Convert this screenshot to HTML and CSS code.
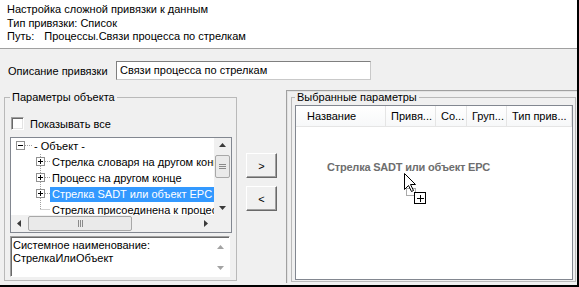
FILE: index.html
```html
<html lang="ru">
<head>
  <meta charset="UTF-8">
  <title>Настройка сложной привязки к данным</title>
  <link rel="stylesheet" href="styles.css">
</head>
<body>

<div class="window">

  <div class="info">
    <div>Настройка сложной привязки к данным</div>
    <div>Тип привязки: Список</div>
    <div>Путь:<span class="path">Процессы.Связи процесса по стрелкам</span></div>
  </div>

  <div class="desc_row">
    <span class="desc_label">Описание привязки</span>
    <div class="textbox">Связи процесса по стрелкам</div>
  </div>

  <div class="main">

    <fieldset class="group group--left">
      <legend>Параметры объекта</legend>

      <div class="check_row">
        <span class="checkbox"></span>
        <span>Показывать все</span>
      </div>

      <div class="tree">
        <div class="tree_rows">
          <div class="tree_row tree_row--root">
            <svg class="twig" width="16" height="16" viewBox="0 0 16 16">
              <line class="dots" x1="9" y1="7.5" x2="16" y2="7.5"/>
              <rect class="pm_box" x="0.5" y="3.5" width="8" height="8"/>
              <line class="pm_sign" x1="2" y1="7.5" x2="7" y2="7.5"/>
            </svg>
            <span class="node">- Объект -</span>
          </div>
          <div class="tree_row tree_row--child">
            <svg class="twig" width="14" height="16" viewBox="0 0 14 16">
              <line class="dots" x1="4.5" y1="0" x2="4.5" y2="16"/>
              <line class="dots" x1="9" y1="7.5" x2="14" y2="7.5"/>
              <rect class="pm_box" x="0.5" y="3.5" width="8" height="8"/>
              <line class="pm_sign" x1="2" y1="7.5" x2="7" y2="7.5"/>
              <line class="pm_sign" x1="4.5" y1="5" x2="4.5" y2="10"/>
            </svg>
            <span class="node">Стрелка словаря на другом конце</span>
          </div>
          <div class="tree_row tree_row--child">
            <svg class="twig" width="14" height="16" viewBox="0 0 14 16">
              <line class="dots" x1="4.5" y1="0" x2="4.5" y2="16"/>
              <line class="dots" x1="9" y1="7.5" x2="14" y2="7.5"/>
              <rect class="pm_box" x="0.5" y="3.5" width="8" height="8"/>
              <line class="pm_sign" x1="2" y1="7.5" x2="7" y2="7.5"/>
              <line class="pm_sign" x1="4.5" y1="5" x2="4.5" y2="10"/>
            </svg>
            <span class="node">Процесс на другом конце</span>
          </div>
          <div class="tree_row tree_row--child">
            <svg class="twig" width="14" height="16" viewBox="0 0 14 16">
              <line class="dots" x1="4.5" y1="0" x2="4.5" y2="16"/>
              <line class="dots" x1="9" y1="7.5" x2="14" y2="7.5"/>
              <rect class="pm_box" x="0.5" y="3.5" width="8" height="8"/>
              <line class="pm_sign" x1="2" y1="7.5" x2="7" y2="7.5"/>
              <line class="pm_sign" x1="4.5" y1="5" x2="4.5" y2="10"/>
            </svg>
            <span class="node node--selected">Стрелка SADT или объект EPC</span>
          </div>
          <div class="tree_row tree_row--child">
            <svg class="twig" width="14" height="16" viewBox="0 0 14 16">
              <line class="dots" x1="4.5" y1="0" x2="4.5" y2="7.5"/>
              <line class="dots" x1="4.5" y1="7.5" x2="14" y2="7.5"/>
            </svg>
            <span class="node">Стрелка присоединена к процессу</span>
          </div>
        </div>

        <div class="vscroll">
          <svg class="arrow" width="7" height="4" viewBox="0 0 7 4"><polygon points="3.5,0 7,4 0,4"/></svg>
          <div class="vscroll_track">
            <div class="vthumb">
              <svg width="7" height="5" viewBox="0 0 7 5"><path d="M0 0.5H7M0 2.5H7M0 4.5H7"/></svg>
            </div>
          </div>
          <svg class="arrow" width="7" height="4" viewBox="0 0 7 4"><polygon points="0,0 7,0 3.5,4"/></svg>
        </div>

        <div class="hscroll">
          <svg class="arrow" width="4" height="7" viewBox="0 0 4 7"><polygon points="0,3.5 4,0 4,7"/></svg>
          <div class="hscroll_track">
            <div class="hthumb">
              <svg width="5" height="7" viewBox="0 0 5 7"><path d="M0.5 0V7M2.5 0V7M4.5 0V7"/></svg>
            </div>
          </div>
          <svg class="arrow" width="4" height="7" viewBox="0 0 4 7"><polygon points="0,0 4,3.5 0,7"/></svg>
        </div>

        <div class="corner"></div>
      </div>

      <div class="sysname">
        <div class="sysname_text">
          Системное наименование:<br>
          СтрелкаИлиОбъект
        </div>
        <div class="sysname_scroll">
          <svg class="arrow arrow--off" width="7" height="4" viewBox="0 0 7 4"><polygon points="3.5,0 7,4 0,4"/></svg>
          <svg class="arrow arrow--off" width="7" height="4" viewBox="0 0 7 4"><polygon points="0,0 7,0 3.5,4"/></svg>
        </div>
      </div>
    </fieldset>

    <div class="move_buttons">
      <div class="btn">&gt;</div>
      <div class="btn">&lt;</div>
    </div>

    <div class="right_panel">
      <fieldset class="group group--right">
        <legend>Выбранные параметры</legend>
        <div class="listview">
          <div class="list_head">
            <div class="col col--name">Название</div>
            <div class="col col--bind">Привя...</div>
            <div class="col col--co">Со...</div>
            <div class="col col--group">Груп...</div>
            <div class="col col--type">Тип прив...</div>
          </div>

          <!-- drag image + cursor over the list -->
          <div class="drag_text">Стрелка SADT или объект EPC</div>
          <svg class="drag_cursor" width="24" height="33" viewBox="0 0 24 33">
            <rect class="drag_rect" x="3.5" y="16.5" width="9" height="7"/>
            <path class="cursor" d="M1.5 1.5V17.5L5.5 13.5L8.5 19.5L10.5 18.5L7.5 12.5H12.5Z"/>
            <rect class="plus_box" x="11.5" y="20.5" width="11" height="11"/>
            <path class="plus" d="M14 26.5H21M17.5 23V30"/>
          </svg>
        </div>
      </fieldset>
    </div>

  </div>
</div>

</body>
</html>
```

FILE: styles.css
```css
* {
  padding: 0;
  margin: 0;
  box-sizing: border-box;
}

body {
  background: #fff;
  font-family: 'Liberation Sans', Arial, sans-serif;
  font-size: 11px;
  color: #000;
}

.window {
  width: 579px;
  height: 287px;
  display: flex;
  flex-direction: column;
  background: #f0f0f0;
  border-right: 2px solid #000;
  border-bottom: 2px solid #000;
  overflow: hidden;
}

/* header */
.info {
  height: 49px;
  padding: 3px 0 0 7px;
  line-height: 13.5px;
  background: #fff;
  border-bottom: 1px solid #a0a0a0;
}
.path { margin-left: 10px; }

/* description */
.desc_row {
  display: flex;
  align-items: center;
  padding: 12px 0 0 8px;
}
.desc_label { width: 108px; }
.textbox {
  width: 255px;
  height: 19px;
  line-height: 17px;
  padding-left: 3px;
  background: #fff;
  border: 1px solid #c9c9c9;
  border-top-color: #7f7f7f;
  border-left-color: #7f7f7f;
}

/* main area */
.main {
  flex: 1;
  display: flex;
  margin-top: 8px;
}

.group {
  border: 1px solid #b9b9b9;
}
.group legend {
  padding: 0 2px;
  line-height: 13px;
}

.group--left {
  width: 233px;
  margin: 3px 0 4px 4px;
  padding: 0 4px 3px 5px;
}

.check_row {
  display: flex;
  align-items: center;
  gap: 6px;
  height: 13px;
  margin: 13px 0 0 1px;
}
.checkbox {
  width: 13px;
  height: 13px;
  background: #fff;
  border: 1px solid;
  border-color: #a0a0a0 #fff #fff #a0a0a0;
  box-shadow: inset 1px 1px 0 #696969, inset -1px -1px 0 #e3e3e3;
}

/* tree */
.tree {
  width: 222px;
  height: 96px;
  margin-top: 7px;
  display: grid;
  grid-template-columns: 1fr 17px;
  grid-template-rows: 1fr 17px;
  background: #fff;
  border: 1px solid #828790;
}
.tree_rows {
  overflow: hidden;
}
.tree_row {
  height: 16px;
  display: flex;
  align-items: center;
  white-space: nowrap;
}
.tree_row--root { padding-left: 5px; }
.tree_row--child { padding-left: 25px; }
.twig { flex: none; }
.dots {
  stroke: #a0a0a0;
  stroke-width: 1;
  stroke-dasharray: 1 1;
}
.pm_box {
  fill: #fff;
  stroke: #919191;
}
.pm_sign { stroke: #000; }
.node {
  padding: 0 2px;
  line-height: 15px;
}
.node--selected {
  background: #3399ff;
  color: #fff;
}

.arrow { fill: #3a3a3a; flex: none; }
.arrow--off { fill: #a3a3a3; }

.vscroll {
  display: flex;
  flex-direction: column;
  align-items: center;
  padding: 5px 0;
  background: #f0f0f0;
}
.vscroll_track {
  flex: 1;
  width: 100%;
  padding-top: 8px;
}
.vthumb {
  height: 23px;
  margin: 0 1px;
  display: flex;
  align-items: center;
  justify-content: center;
  background: #eaeaea;
  border: 1px solid #a8a8a8;
  border-radius: 2px;
}
.vthumb path, .hthumb path { stroke: #8a8a8a; }

.hscroll {
  display: flex;
  align-items: center;
  padding: 0 6px;
  background: #f0f0f0;
}
.hscroll_track {
  flex: 1;
  height: 100%;
  padding: 1px 0 1px 7px;
}
.hthumb {
  width: 104px;
  height: 100%;
  display: flex;
  align-items: center;
  justify-content: center;
  background: #eaeaea;
  border: 1px solid #a8a8a8;
  border-radius: 2px;
}
.corner { background: #f0f0f0; }

/* system name */
.sysname {
  width: 220px;
  height: 41px;
  margin-top: 3px;
  display: flex;
  background: #fff;
  border: 1px solid;
  border-color: #a0a0a0 #fff #fff #a0a0a0;
  box-shadow: inset 1px 1px 0 #696969;
}
.sysname_text {
  flex: 1;
  padding: 2px 0 0 2px;
  line-height: 13px;
}
.sysname_scroll {
  width: 17px;
  display: flex;
  flex-direction: column;
  align-items: center;
  justify-content: space-between;
  padding: 8px 0 6px;
}

/* > < buttons */
.move_buttons {
  width: 49px;
  display: flex;
  flex-direction: column;
  gap: 8px;
  padding: 65px 0 0 9px;
}
.btn {
  width: 31px;
  height: 25px;
  display: flex;
  align-items: center;
  justify-content: center;
  background: #f0f0f0;
  border: 1px solid;
  border-color: #fff #696969 #696969 #fff;
  box-shadow: inset -1px -1px 0 #a0a0a0;
}

/* right side */
.right_panel {
  flex: 1;
  display: flex;
  flex-direction: column;
  margin: 2px 0 2px;
  padding: 0 1px 1px 4px;
  border-top: 1px solid #a0a0a0;
  border-left: 1px solid #a0a0a0;
  box-shadow: inset 1px 1px 0 #e3e3e3;
}
.group--right {
  flex: 1;
  display: flex;
  flex-direction: column;
  padding: 1px 2px 1px 3px;
}

.listview {
  flex: 1;
  position: relative;
  background: #fff;
  border: 1px solid #828790;
}
.list_head {
  height: 21px;
  display: flex;
  border-bottom: 1px solid #e5e5e5;
  background: linear-gradient(#fff, #f7f8f9);
}
.col {
  line-height: 20px;
  white-space: nowrap;
  overflow: hidden;
  border-right: 1px solid #e5e5e5;
}
.col--name { width: 90px; padding-left: 11px; }
.col--bind { width: 50px; padding-left: 5px; }
.col--co { width: 31px; padding-left: 5px; }
.col--group { width: 40px; padding-left: 5px; }
.col--type { width: 65px; padding-left: 5px; }

.drag_text {
  position: absolute;
  left: 31px;
  top: 55px;
  line-height: 13px;
  font-weight: bold;
  color: #6e6e6e;
  letter-spacing: -0.2px;
  white-space: nowrap;
}
.drag_cursor {
  position: absolute;
  left: 107px;
  top: 66px;
}
.cursor {
  fill: #fff;
  stroke: #000;
  stroke-linejoin: miter;
}
.drag_rect {
  fill: none;
  stroke: #555;
  stroke-dasharray: 1 1;
}
.plus_box {
  fill: #fff;
  stroke: #000;
}
.plus { stroke: #000; }
```
